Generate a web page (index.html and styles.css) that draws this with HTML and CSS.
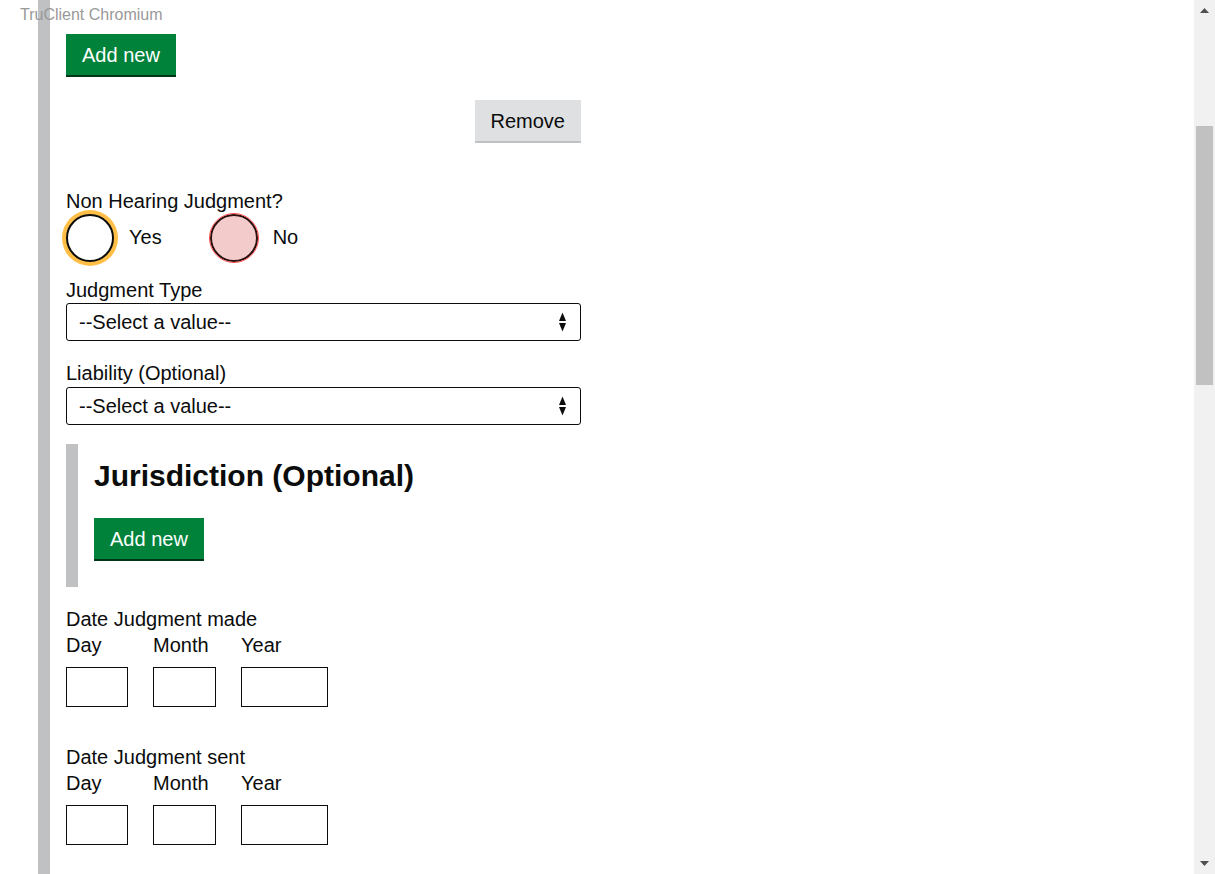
FILE: index.html
```html
<!DOCTYPE html>
<html lang="en">
<head>
<meta charset="utf-8">
<title>Judgment</title>
<link rel="stylesheet" href="styles.css">
</head>
<body>
<div class="viewport">
  <div class="brand">TruClient Chromium</div>
  <main class="page">
    <div class="section">
      <button class="btn btn-primary" type="button">Add new</button>
      <div class="remove-row">
        <button class="btn btn-secondary" type="button">Remove</button>
      </div>

      <div class="group group-radios">
        <div class="label">Non Hearing Judgment?</div>
        <div class="radios">
          <label class="radio">
            <span class="radio-circle is-focused"></span>
            <span class="radio-text">Yes</span>
          </label>
          <label class="radio">
            <span class="radio-circle is-highlighted"></span>
            <span class="radio-text">No</span>
          </label>
        </div>
      </div>

      <div class="group group-select">
        <div class="label">Judgment Type</div>
        <div class="select">
          <span class="select-value">--Select a value--</span>
          <svg class="select-arrows" width="7" height="20" viewBox="0 0 7 20" aria-hidden="true">
            <path d="M3.5 0.5 L7 9 L0 9 Z" fill="#0b0c0c"/>
            <path d="M0 11 L7 11 L3.5 19.5 Z" fill="#0b0c0c"/>
          </svg>
        </div>
      </div>

      <div class="group group-select2">
        <div class="label">Liability (Optional)</div>
        <div class="select select-2">
          <span class="select-value">--Select a value--</span>
          <svg class="select-arrows" width="7" height="20" viewBox="0 0 7 20" aria-hidden="true">
            <path d="M3.5 0.5 L7 9 L0 9 Z" fill="#0b0c0c"/>
            <path d="M0 11 L7 11 L3.5 19.5 Z" fill="#0b0c0c"/>
          </svg>
        </div>
      </div>

      <section class="subsection">
        <h2 class="subsection-title">Jurisdiction (Optional)</h2>
        <button class="btn btn-primary" type="button">Add new</button>
      </section>

      <div class="group date-group">
        <div class="label">Date Judgment made</div>
        <div class="date-fields">
          <div class="date-item">
            <div class="label">Day</div>
            <div class="date-input w-day"></div>
          </div>
          <div class="date-item">
            <div class="label">Month</div>
            <div class="date-input w-month"></div>
          </div>
          <div class="date-item">
            <div class="label">Year</div>
            <div class="date-input w-year"></div>
          </div>
        </div>
      </div>

      <div class="group date-group date-group-2">
        <div class="label">Date Judgment sent</div>
        <div class="date-fields">
          <div class="date-item">
            <div class="label">Day</div>
            <div class="date-input w-day"></div>
          </div>
          <div class="date-item">
            <div class="label">Month</div>
            <div class="date-input w-month"></div>
          </div>
          <div class="date-item">
            <div class="label">Year</div>
            <div class="date-input w-year"></div>
          </div>
        </div>
      </div>
    </div>
  </main>
  <div class="scrollbar">
    <div class="scroll-arrow">
      <svg width="9" height="5" viewBox="0 0 9 5"><path d="M4.5 0 L9 5 L0 5 Z" fill="#505050"/></svg>
    </div>
    <div class="scroll-track">
      <div class="scroll-thumb"></div>
    </div>
    <div class="scroll-arrow">
      <svg width="9" height="5" viewBox="0 0 9 5"><path d="M0 0 L9 0 L4.5 5 Z" fill="#505050"/></svg>
    </div>
  </div>
</div>
</body>
</html>
```

FILE: styles.css
```css
html, body {
  margin: 0;
  padding: 0;
  background: #ffffff;
}

body {
  font-family: "Liberation Sans", Arial, sans-serif;
  color: #0b0c0c;
  font-size: 20px;
  line-height: 26px;
}

.viewport {
  position: relative;
  display: flex;
  height: 874px;
  overflow: hidden;
}

.brand {
  position: absolute;
  left: 20px;
  top: 5px;
  font-size: 16px;
  line-height: 20px;
  color: #999999;
}

.page {
  flex: 1;
  padding-left: 38px;
}

.section {
  height: 100%;
  box-sizing: border-box;
  border-left: 12px solid #bfc1c3;
  padding: 34px 0 0 16px;
  width: 531px;
}

/* Buttons */
.btn {
  display: inline-block;
  box-sizing: border-box;
  height: 41px;
  font-family: "Liberation Sans", Arial, sans-serif;
  font-size: 20px;
  line-height: 25px;
  padding: 9px 16px 7px;
  border: 0;
  border-radius: 0;
  margin: 0;
  cursor: pointer;
}

.btn-primary {
  background: #00823b;
  color: #ffffff;
  box-shadow: 0 2px 0 #003618;
}

.btn-secondary {
  background: #dee0e2;
  color: #0b0c0c;
  box-shadow: 0 2px 0 #bfc1c3;
}

.remove-row {
  display: flex;
  justify-content: flex-end;
  width: 515px;
  margin-top: 25px;
}

/* Groups */
.label {
  display: block;
}

.group-radios {
  margin-top: 47px;
}

.radios {
  display: flex;
  align-items: center;
  height: 49px;
  margin-top: -1px;
}

.radio {
  display: flex;
  align-items: center;
}

.radio-text {
  padding-left: 15px;
  padding-right: 48px;
  margin-top: -2px;
}

.radio-circle {
  display: block;
  box-sizing: border-box;
  width: 48px;
  height: 48px;
  border: 2px solid #0b0c0c;
  border-radius: 50%;
  background: #ffffff;
}

.radio-circle.is-focused {
  box-shadow: 0 0 0 4px #ffbf47;
}

.radio-circle.is-highlighted {
  background: #f3cbcb;
  border-color: #2a0f0f;
  outline: 1px solid #ff4d4d;
}

.group-select {
  margin-top: 15px;
}

.group-select2 {
  margin-top: 19px;
}

.select {
  display: flex;
  align-items: center;
  justify-content: space-between;
  box-sizing: border-box;
  width: 515px;
  height: 38px;
  border: 1px solid #0b0c0c;
  border-radius: 3px;
  padding: 0 14px 0 12px;
}

.select-2 {
  margin-top: 1px;
}

.select-arrows {
  display: block;
}

/* Subsection */
.subsection {
  margin-top: 19px;
  border-left: 12px solid #bfc1c3;
  padding: 14px 0 28px 16px;
}

.subsection-title {
  margin: 0 0 24px 0;
  font-size: 30px;
  line-height: 36px;
  font-weight: 700;
}

/* Dates */
.date-group {
  margin-top: 19px;
}

.date-group-2 {
  margin-top: 37px;
}

.date-fields {
  display: flex;
  gap: 25px;
}

.date-input {
  box-sizing: border-box;
  height: 40px;
  margin-top: 9px;
  border: 1px solid #0b0c0c;
  background: #ffffff;
}

.w-day { width: 62px; }
.w-month { width: 63px; }
.w-year { width: 87px; }

/* Scrollbar */
.scrollbar {
  width: 21px;
  flex: none;
  display: flex;
  flex-direction: column;
  background: #f1f1f1;
}

.scroll-arrow {
  height: 21px;
  display: flex;
  align-items: center;
  justify-content: center;
}

.scroll-track {
  flex: 1;
  padding-top: 105px;
}

.scroll-thumb {
  margin: 0 2px;
  height: 259px;
  background: #c1c1c1;
}
```
